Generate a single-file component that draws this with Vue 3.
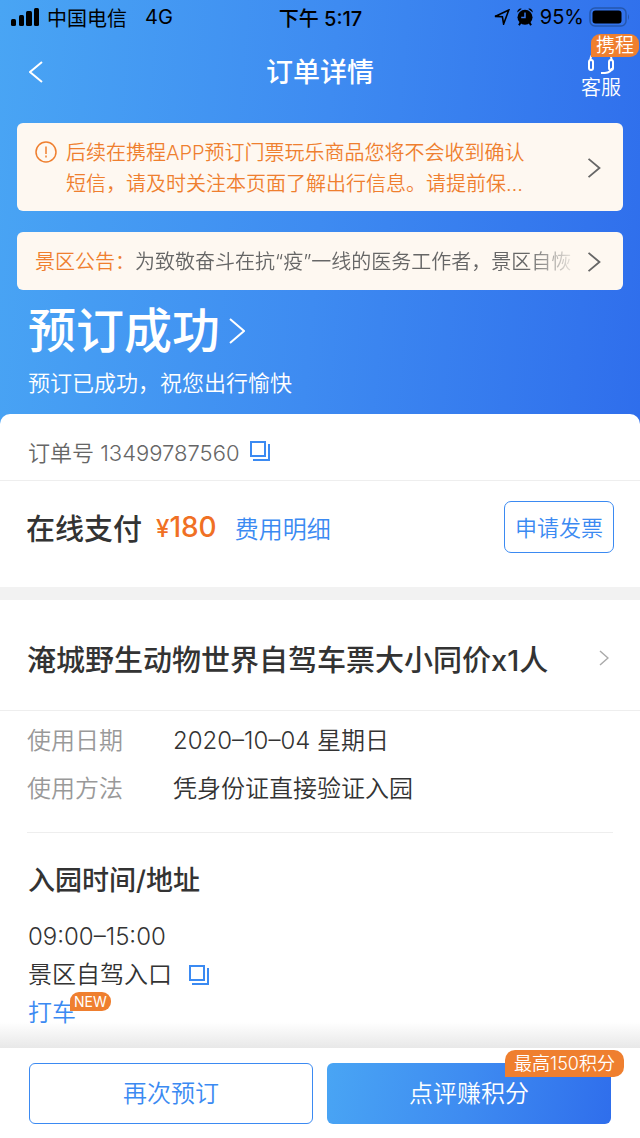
<script setup>
const usage = [
  { label: '使用日期', value: '2020–10–04 星期日' },
  { label: '使用方法', value: '凭身份证直接验证入园' },
]
</script>

<template>
  <div class="page">
    <header class="hero">
      <div class="status">
        <div class="status-side">
          <svg class="signal" viewBox="0 0 28 18" aria-hidden="true">
            <rect x="0" y="11" width="5" height="7" rx="1.5" />
            <rect x="8" y="7" width="5" height="11" rx="1.5" />
            <rect x="15" y="3" width="6" height="15" rx="1.5" />
            <rect x="23" y="0" width="5" height="18" rx="1.5" />
          </svg>
          <span>中国电信</span>
          <span class="network">4G</span>
        </div>
        <span class="time">下午 5:17</span>
        <div class="status-side right">
          <svg class="locate" viewBox="0 0 16 16" aria-hidden="true">
            <path d="M1 7.4 14.8 1 9.6 15 8.4 7.8Z" />
          </svg>
          <svg class="alarm" viewBox="0 0 16 18" aria-hidden="true">
            <path d="M3.500 14.500 2 17.200M12.500 14.500l1.500 2.700" class="leg" />
            <path d="M.3 4.500A3.400 3.400 0 0 1 4.800 .8ZM15.700 4.500A3.400 3.400 0 0 0 11.200 .8Z" />
            <circle cx="8" cy="9.200" r="7.500" />
            <path d="M8 4.500v5H4.200" class="hand" />
          </svg>
          <span>95%</span>
          <svg class="battery" viewBox="0 0 41 20" aria-hidden="true">
            <rect x="1" y="1" width="36" height="18" rx="5" class="shell" />
            <rect x="3.500" y="3.500" width="29" height="13" rx="3" />
            <path d="M39 7q2 3 0 6Z" class="tip" />
          </svg>
        </div>
      </div>

      <div class="navbar">
        <button class="back" aria-label="返回">
          <svg viewBox="0 0 14 22" aria-hidden="true"><path d="M13 1 1 11l12 10" /></svg>
        </button>
        <h1>订单详情</h1>
        <button class="service">
          <svg viewBox="0 0 28 26" aria-hidden="true">
            <rect x="2" y="11" width="4" height="10" rx="2" />
            <rect x="22" y="11" width="4" height="10" rx="2" />
            <path d="M3.500 11C3.500-1 24.500-1 24.500 11M25 19q-1 4.500-7 5h-4" />
          </svg>
          <span>客服</span>
          <em>携程</em>
        </button>
      </div>

      <button class="notice">
        <svg class="warn" viewBox="0 0 22 22" aria-hidden="true">
          <circle cx="11" cy="11" r="10" />
          <path d="M11 5.500v7.500M11 14.500v2" />
        </svg>
        <span class="notice-text">后续在携程APP预订门票玩乐商品您将不会收到确认<br>短信，请及时关注本页面了解出行信息。请提前保…</span>
        <svg class="chevron" viewBox="0 0 14 22" aria-hidden="true"><path d="M1 1l12 10L1 21" /></svg>
      </button>

      <button class="notice bulletin">
        <span class="bulletin-label">景区公告：</span>
        <span class="bulletin-text">为致敬奋斗在抗“疫”一线的医务工作者，景区自恢</span>
        <svg class="chevron" viewBox="0 0 14 22" aria-hidden="true"><path d="M1 1l12 10L1 21" /></svg>
      </button>

      <button class="state">
        <span>预订成功</span>
        <svg viewBox="0 0 16 26" aria-hidden="true"><path d="M1 1l14 12L1 25" /></svg>
      </button>
      <p class="state-note">预订已成功，祝您出行愉快</p>
    </header>

    <main class="sheet">
      <div class="order">
        <span>订单号 13499787560</span>
        <button class="copy" aria-label="复制订单号">
          <svg viewBox="0 0 20 20" aria-hidden="true"><path d="M1 1h14v14H1ZM19 3v16H3" /></svg>
        </button>
      </div>

      <div class="pay">
        <span class="pay-label">在线支付</span>
        <strong><small>¥</small>180</strong>
        <a href="#fee">费用明细</a>
        <button class="invoice">申请发票</button>
      </div>

      <button class="product">
        <span>淹城野生动物世界自驾车票大小同价x1人</span>
        <svg viewBox="0 0 10 16" aria-hidden="true"><path d="M1 1l8 7-8 7" /></svg>
      </button>

      <dl class="usage">
        <div v-for="item in usage" :key="item.label">
          <dt>{{ item.label }}</dt>
          <dd>{{ item.value }}</dd>
        </div>
      </dl>

      <section class="venue">
        <h2>入园时间/地址</h2>
        <p>09:00–15:00</p>
        <p class="place">
          <span>景区自驾入口</span>
          <button class="copy" aria-label="复制地址">
            <svg viewBox="0 0 20 20" aria-hidden="true"><path d="M1 1h14v14H1ZM19 3v16H3" /></svg>
          </button>
        </p>
        <p><a class="taxi" href="#taxi">打车<em>NEW</em></a></p>
      </section>
    </main>

    <footer class="actions">
      <button class="again">再次预订</button>
      <button class="review">点评赚积分<em>最高150积分</em></button>
    </footer>
  </div>
</template>

<style>
body {
  margin: 0;
  background: #fff;
}
</style>

<style scoped>
* {
  box-sizing: border-box;
}

.page {
  display: flex;
  flex-direction: column;
  min-height: 100vh;
  overflow: hidden;
  color: #333;
  font-family: Inter, "Noto Sans CJK SC", sans-serif;
  font-size: 22px;
  font-weight: 350;
}

button {
  padding: 0;
  border: 0;
  background: none;
  color: inherit;
  font: inherit;
  cursor: pointer;
}

a {
  color: #3b8af2;
  text-decoration: none;
}

em {
  font-style: normal;
}

svg {
  display: block;
  flex: none;
  fill: none;
  stroke: currentColor;
  stroke-width: 2;
}

h1,
h2,
p,
dl,
dd {
  margin: 0;
}

.hero {
  display: flex;
  flex-direction: column;
  padding: 0 17px 26px;
  background: linear-gradient(95deg, #49a5f4, #3e8bf1 50%, #2f6eec);
  color: #fff;
}

.status {
  display: grid;
  grid-template-columns: 1fr auto 1fr;
  align-items: center;
  height: 34px;
  margin: 0 -7px 0 -6px;
  color: #000;
  font-size: 20px;
  font-weight: 400;
}

.status svg {
  fill: #000;
  stroke: none;
}

.status-side {
  display: flex;
  align-items: center;
  gap: 8px;
}

.network {
  margin-left: 10px;
}

.right {
  justify-content: flex-end;
  gap: 5px;
}

.time {
  font-weight: 500;
}

.signal {
  width: 28px;
  height: 18px;
}

.status .locate {
  width: 16px;
  height: 16px;
  fill: none;
  stroke: #000;
  stroke-width: 1.6;
}

.alarm {
  width: 16px;
  height: 18px;
  margin: 0 2px;
}

.status .leg {
  stroke: #000;
  stroke-width: 2;
}

.status .hand {
  fill: none;
  stroke: #3779ee;
  stroke-width: 1.5;
}

.battery {
  width: 41px;
  height: 20px;
}

.status .shell {
  fill: none;
  stroke: #2557ad;
  stroke-width: 1.5;
}

.status .tip {
  fill: #2557ad;
}

.navbar {
  display: grid;
  grid-template-columns: 1fr auto 1fr;
  height: 89px;
}

.back {
  justify-self: start;
  align-self: start;
  padding: 27px 12px;
}

.back svg {
  width: 14px;
  height: 22px;
}

h1 {
  font-size: 27px;
  font-weight: 500;
  line-height: 78px;
}

.service {
  position: relative;
  display: flex;
  flex-direction: column;
  align-items: center;
  justify-self: end;
  align-self: start;
  margin-right: 2px;
  padding-top: 15px;
  font-size: 20px;
  line-height: 26px;
}

.service svg {
  width: 28px;
  height: 26px;
}

.service em {
  position: absolute;
  top: 0;
  left: 10px;
  padding: 0 5px;
  border-radius: 9px 9px 9px 0;
  background: #ef7f2f;
  font-size: 19px;
  line-height: 23px;
  white-space: nowrap;
}

.notice {
  display: flex;
  align-items: center;
  min-height: 88px;
  padding: 2px 22px 0 18px;
  border-radius: 6px;
  background: #fef8f1;
  color: #ef7f2f;
  font-size: 20px;
  line-height: 31px;
  text-align: left;
}

.warn {
  align-self: flex-start;
  width: 22px;
  height: 22px;
  margin: 16px 9px 0 0;
  stroke-width: 1.5;
}

.notice-text {
  flex: 1;
  padding-top: 2px;
  white-space: nowrap;
}

.chevron {
  width: 14px;
  height: 20px;
  color: #666;
}

.bulletin {
  min-height: 58px;
  margin-top: 21px;
}

.bulletin-text {
  flex: 1;
  margin-right: 7px;
  color: #666;
  white-space: nowrap;
  mask-image: linear-gradient(90deg, #000 88%, transparent);
}

.state {
  display: flex;
  align-items: center;
  align-self: flex-start;
  gap: 9px;
  margin: 6px 0 0 11px;
  font-size: 48px;
  font-weight: 500;
  line-height: 70px;
}

.state svg {
  width: 16px;
  height: 26px;
}

.state-note {
  margin-left: 11px;
  line-height: 34px;
}

.sheet {
  flex: 1;
  margin-top: -12px;
  padding-bottom: 16px;
  border-radius: 10px 10px 0 0;
  background: linear-gradient(#fff, #e8e8e8) bottom / 100% 26px no-repeat #fff;
}

.order {
  display: flex;
  align-items: center;
  gap: 11px;
  height: 67px;
  padding: 8px 28px 0;
  border-bottom: 1px solid #eee;
  color: #666;
}

.copy {
  color: #3b8af2;
}

.copy svg {
  width: 20px;
  height: 20px;
}

.pay {
  display: flex;
  align-items: center;
  min-height: 119px;
  padding: 0 26px 14px;
  border-bottom: 13px solid #f2f2f2;
  font-size: 24px;
}

.pay-label {
  font-size: 29px;
  font-weight: 500;
}

.pay strong {
  margin: 0 18px 0 14px;
  color: #f07024;
  font-size: 28px;
  font-weight: 450;
}

.pay small {
  font-size: 24px;
}

.invoice {
  width: 110px;
  height: 52px;
  margin-left: auto;
  padding-bottom: 2px;
  border: 1px solid #3b8af2;
  border-radius: 7px;
  color: #3b8af2;
  font-size: 22px;
}

.product {
  display: flex;
  align-items: center;
  justify-content: space-between;
  width: 100%;
  height: 111px;
  padding: 6px 31px 0 27px;
  border-bottom: 1px solid #eee;
  font-size: 29px;
  font-weight: 500;
}

.product svg {
  width: 10px;
  height: 16px;
  color: #aaa;
  stroke-width: 1.5;
}

.usage {
  margin: 0 27px;
  padding: 6px 0 19px;
  border-bottom: 1px solid #eee;
  font-size: 24px;
  line-height: 48px;
}

.usage div {
  display: flex;
}

dt {
  width: 146px;
  color: #999;
}

.venue {
  padding: 25px 28px 0;
  font-size: 24px;
  line-height: 38px;
}

h2 {
  margin-bottom: 14px;
  font-size: 27px;
  font-weight: 500;
  line-height: 46px;
}

.place {
  display: flex;
  align-items: center;
  gap: 17px;
}

.taxi {
  position: relative;
}

.taxi em {
  position: absolute;
  top: -6px;
  left: 42px;
  padding: 0 4px;
  border-radius: 9px 9px 9px 0;
  background: #ef7f2f;
  color: #fff;
  font-size: 14px;
  font-weight: 400;
  line-height: 19px;
}

.actions {
  display: grid;
  grid-template-columns: 1fr 1fr;
  gap: 14px;
  padding: 15px 29px 14px;
  background: #fff;
  font-size: 24px;
}

.actions button {
  position: relative;
  height: 61px;
  padding-bottom: 4px;
  border-radius: 6px;
}

.again {
  border: 1px solid #3b8af2;
  color: #3b8af2;
}

.review {
  background: linear-gradient(100deg, #49a5f4, #3e8bf1 50%, #2f6eec);
  color: #fff;
}

.review em {
  position: absolute;
  top: -13px;
  right: -13px;
  padding: 0 9px;
  border-radius: 10px 10px 10px 0;
  background: #ef7f2f;
  font-size: 18px;
  line-height: 27px;
}
</style>
